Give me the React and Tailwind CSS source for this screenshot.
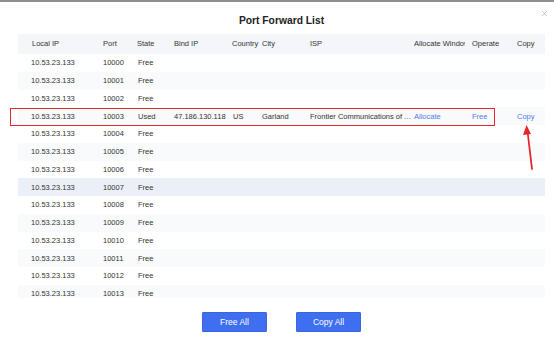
import { X } from 'lucide-react';
import { clsx } from 'clsx';

const cols = '85px 34px 37px 58px 30px 48px 104px 58px 45px 28px';

const rows = Array.from({ length: 14 }, (_, i) => ({
  ip: '10.53.23.133',
  port: 10000 + i,
  state: i === 3 ? 'Used' : 'Free',
}));

const headers = ['Local IP', 'Port', 'State', 'Bind IP', 'Country', 'City', 'ISP', 'Allocate Window', 'Operate', 'Copy'];

export default function App() {
  return (
    <div
      className="w-[554px] h-[340px] bg-white relative overflow-hidden text-[#333]"
      style={{ fontFamily: "'Liberation Sans', Arial, sans-serif" }}
    >
      <div className="h-[2px] bg-[#8e8e8e]" />

      <X className="absolute left-[540px] top-[9px] text-[#9a9a9a]" size={9} strokeWidth={1.4} />

      <div className="pl-[18px] pt-[12px] w-[545px] relative">
        <h1 className="h-[14px] leading-[14px] text-center text-[10.3px] font-bold text-[#222]">
          Port Forward List
        </h1>

        {/* Table header */}
        <div
          className="mt-[6px] grid h-[20px] items-center bg-[#f4f6f9] text-[7.5px] text-[#333]"
          style={{ gridTemplateColumns: cols }}
        >
          {headers.map((h, i) => (
            <div key={h} className={clsx('overflow-hidden whitespace-nowrap', i === 0 && 'pl-[14px]', i === 7 && 'pr-[7px]')}>
              <div className="overflow-hidden">{h}</div>
            </div>
          ))}
        </div>

        {/* Table body */}
        <div className="h-[244px] overflow-hidden text-[7.5px]">
          {rows.map((r, i) => (
            <div
              key={r.port}
              className={clsx(
                'grid h-[17.75px] items-center',
                i === 7 ? 'bg-[#ebf0f8]' : i % 2 === 1 ? 'bg-[#f9fafb]' : 'bg-white'
              )}
              style={{ gridTemplateColumns: cols }}
            >
              <div className="pl-[13px]">{r.ip}</div>
              <div>{r.port}</div>
              <div className="pl-[1px]">{r.state}</div>
              <div>{i === 3 ? '47.186.130.118' : ''}</div>
              <div className="pl-[1px]">{i === 3 ? 'US' : ''}</div>
              <div>{i === 3 ? 'Garland' : ''}</div>
              <div className="overflow-hidden whitespace-nowrap text-ellipsis">
                {i === 3 ? 'Frontier Communications of America' : ''}
              </div>
              <div className="text-[#4d7cf0]">{i === 3 ? 'Allocate' : ''}</div>
              <div className="text-[#4d7cf0]">{i === 3 ? 'Free' : ''}</div>
              <div className="text-[#4d7cf0]">{i === 3 ? 'Copy' : ''}</div>
            </div>
          ))}
        </div>

        {/* Highlight box */}
        <div className="absolute left-[10px] top-[106px] w-[485px] h-[18px] border-[1.5px] border-[#e5262c] pointer-events-none" />

        {/* Arrow */}
        <svg className="absolute left-[518px] top-[119px] pointer-events-none" width="24" height="54" viewBox="0 0 24 54">
          <line x1="14" y1="48" x2="9.5" y2="10" stroke="#e5262c" strokeWidth="1.8" strokeLinecap="round" />
          <polygon points="8.5,4 5,14 13,13" fill="#e5262c" />
        </svg>

        {/* Buttons */}
        <div className="mt-[14px] flex justify-center gap-[29px]">
          <button className="w-[65px] h-[20px] bg-[#3f6ff0] border border-[#3a66dc] text-white text-[8.5px] rounded-[1px]">
            Free All
          </button>
          <button className="w-[65px] h-[20px] bg-[#3f6ff0] border border-[#3a66dc] text-white text-[8.5px] rounded-[1px]">
            Copy All
          </button>
        </div>
      </div>
    </div>
  );
}
